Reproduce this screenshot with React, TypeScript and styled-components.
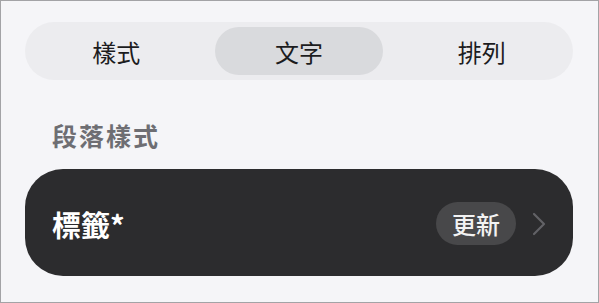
import { createGlobalStyle, styled } from "styled-components";

const GlobalStyle = createGlobalStyle`
  html, body {
    margin: 0;
    padding: 0;
    background: #f5f5f8;
  }
  * {
    box-sizing: border-box;
  }
`;

const tabs = ["樣式", "文字", "排列"];

const App = () => {
  return (
    <>
      <GlobalStyle />
      <Page>
        <Segmented>
          {tabs.map((t) => (
            <Segment key={t} $active={t === "文字"}>
              {t}
            </Segment>
          ))}
        </Segmented>
        <SectionLabel>段落樣式</SectionLabel>
        <StyleCard>
          <CardTitle>標籤*</CardTitle>
          <CardRight>
            <UpdateBadge>更新</UpdateBadge>
            <Chevron viewBox="0 0 14 24" width="14" height="24">
              <path
                d="M2 2 L12 12 L2 22"
                fill="none"
                stroke="#626266"
                strokeWidth="2.2"
                strokeLinecap="round"
                strokeLinejoin="round"
              />
            </Chevron>
          </CardRight>
        </StyleCard>
      </Page>
    </>
  );
};

const Page = styled.div`
  width: 599px;
  height: 303px;
  border: 1px solid #a3a3a6;
  background: #f5f5f8;
  padding: 21px 25px 0 24px;
  display: flex;
  flex-direction: column;
  font-family: "Noto Sans CJK TC", "Noto Sans", sans-serif;
`;

const Segmented = styled.div`
  height: 58px;
  border-radius: 29px;
  background: #ececef;
  padding: 5px 7px;
  display: grid;
  grid-template-columns: repeat(3, 1fr);
  gap: 14px;
`;

const Segment = styled.div<{ $active?: boolean }>`
  display: flex;
  align-items: center;
  justify-content: center;
  border-radius: 24px;
  background: ${(p) => (p.$active ? "#d9dadd" : "transparent")};
  color: #1c1c1e;
  font-size: 24px;
  font-weight: 400;
`;

const SectionLabel = styled.div`
  margin: 39px 0 0 27px;
  height: 32px;
  line-height: 32px;
  font-size: 25px;
  font-weight: 700;
  letter-spacing: 2px;
  color: #6e6e73;
`;

const StyleCard = styled.div`
  margin-top: 18px;
  height: 107px;
  border-radius: 38px;
  background: #2c2c2e;
  padding: 0 27px 0 27px;
  display: flex;
  align-items: center;
  justify-content: space-between;
`;

const CardTitle = styled.div`
  color: #ffffff;
  font-size: 29px;
  font-weight: 700;
  margin-top: 2px;
`;

const CardRight = styled.div`
  display: flex;
  align-items: center;
  gap: 16px;
  margin-top: 2px;
`;

const UpdateBadge = styled.div`
  width: 80px;
  height: 43px;
  border-radius: 22px;
  background: #48484a;
  color: #f2f2f2;
  font-size: 24px;
  font-weight: 500;
  display: flex;
  align-items: center;
  justify-content: center;
`;

const Chevron = styled.svg`
  display: block;
`;

export default App;
